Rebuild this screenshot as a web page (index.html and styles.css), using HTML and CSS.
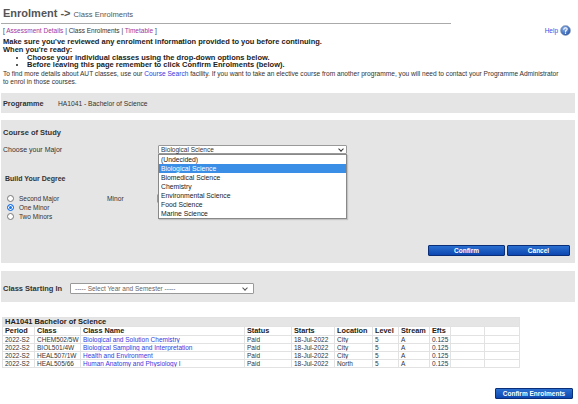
FILE: index.html
```html
<!DOCTYPE html>
<html lang="en">
<head>
  <meta charset="UTF-8" />
  <title>Class Enrolments</title>
  <link rel="stylesheet" href="styles.css">
</head>
<body>

  <h1 class="titolo">Enrolment -&gt; <span class="sottotitolo">Class Enrolments</span></h1>

  <div class="barra-nav">
    <div class="nav">[ <a href="#" class="viola">Assessment Details</a> | Class Enrolments | <a href="#" class="viola">Timetable</a> ]</div>
    <a href="#" class="aiuto">Help
      <svg width="11" height="11" viewBox="0 0 11 11">
        <defs>
          <radialGradient id="g" cx="40%" cy="35%" r="70%">
            <stop offset="0" stop-color="#8fb4ea"/>
            <stop offset="1" stop-color="#1f4fa8"/>
          </radialGradient>
        </defs>
        <circle cx="5.5" cy="5.5" r="5" fill="url(#g)" stroke="#9aa6b8" stroke-width="0.6"/>
        <path d="M3.8 4.3 Q4 2.8 5.6 2.8 Q7.3 2.9 7.1 4.3 Q6.9 5.2 5.8 5.6 L5.6 6.8" fill="none" stroke="#fff" stroke-width="1.1" stroke-linecap="round"/>
        <circle cx="5.5" cy="8.3" r="0.7" fill="#fff"/>
      </svg>
    </a>
  </div>

  <div class="istruzioni">
    <div>Make sure you've reviewed any enrolment information provided to you before continuing.</div>
    <div>When you're ready:</div>
    <ul>
      <li>Choose your individual classes using the drop-down options below.</li>
      <li>Before leaving this page remember to click Confirm Enrolments (below).</li>
    </ul>
  </div>

  <p class="info"><span>To find more details about AUT classes, use our <a href="#" class="blu">Course Search</a> facility. If you want to take an elective course from another programme, you will need to contact your Programme Administrator</span><br><span>to enrol in those courses.</span></p>

  <div class="banda banda-programma">
    <span class="etichetta-programma">Programme</span>
    <span>HA1041 - Bachelor of Science</span>
  </div>

  <div class="banda banda-corso">
    <div class="titolo-sezione">Course of Study</div>
    <div class="riga-major">
      <span class="etichetta-major">Choose your Major</span>
      <div class="contenitore-select">
        <div class="finto-select select-major">Biological Science<span class="freccia"></span></div>
        <ul class="menu-aperto">
          <li>(Undecided)</li>
          <li class="scelto">Biological Science</li>
          <li>Biomedical Science</li>
          <li>Chemistry</li>
          <li>Environmental Science</li>
          <li>Food Science</li>
          <li>Marine Science</li>
        </ul>
      </div>
    </div>

    <div class="titolo-grado">Build Your Degree</div>
    <div class="riga-grado">
      <div class="radio-lista">
        <label class="radio"><span class="cerchio"></span>Second Major</label>
        <label class="radio"><span class="cerchio pieno"></span>One Minor</label>
        <label class="radio"><span class="cerchio"></span>Two Minors</label>
      </div>
      <span class="etichetta-minor">Minor</span>
      <div class="finto-select select-minor"></div>
    </div>

    <div class="riga-bottoni">
      <button class="bottone bottone-conferma">Confirm</button>
      <button class="bottone bottone-annulla">Cancel</button>
    </div>
  </div>

  <div class="banda banda-classe">
    <span class="etichetta-classe">Class Starting In</span>
    <div class="finto-select select-anno">----- Select Year and Semester -----<span class="freccia"></span></div>
  </div>

  <table class="tabella">
    <colgroup>
      <col style="width:32px"><col style="width:46px"><col style="width:164px"><col style="width:47px">
      <col style="width:43px"><col style="width:38px"><col style="width:26px"><col style="width:31px">
      <col style="width:21px"><col style="width:34px"><col style="width:35px">
    </colgroup>
    <tr class="intestazione"><td colspan="11">HA1041 Bachelor of Science</td></tr>
    <tr class="colonne">
      <th>Period</th><th>Class</th><th>Class Name</th><th>Status</th><th>Starts</th><th>Location</th><th>Level</th><th>Stream</th><th>Efts</th><th></th><th></th>
    </tr>
    <tr><td>2022-S2</td><td>CHEM502/5W</td><td><a href="#" class="blu">Biological and Solution Chemistry</a></td><td>Paid</td><td>18-Jul-2022</td><td>City</td><td>5</td><td>A</td><td>0.125</td><td></td><td></td></tr>
    <tr><td>2022-S2</td><td>BIOL501/4W</td><td><a href="#" class="blu">Biological Sampling and Interpretation</a></td><td>Paid</td><td>18-Jul-2022</td><td>City</td><td>5</td><td>A</td><td>0.125</td><td></td><td></td></tr>
    <tr><td>2022-S2</td><td>HEAL507/1W</td><td><a href="#" class="blu">Health and Environment</a></td><td>Paid</td><td>18-Jul-2022</td><td>City</td><td>5</td><td>A</td><td>0.125</td><td></td><td></td></tr>
    <tr><td>2022-S2</td><td>HEAL505/66</td><td><a href="#" class="blu">Human Anatomy and Physiology I</a></td><td>Paid</td><td>18-Jul-2022</td><td>North</td><td>5</td><td>A</td><td>0.125</td><td></td><td></td></tr>
  </table>

  <div class="riga-finale">
    <button class="bottone bottone-finale">Confirm Enrolments</button>
  </div>

</body>
</html>
```

FILE: styles.css
```css
html, body {
  margin: 0;
  padding: 0;
  background: #fff;
  font-family: "Liberation Sans", Arial, sans-serif;
  color: #333;
}

body {
  width: 574px;
  padding-left: 1px;
}

a {
  text-decoration: none;
}

.viola {
  color: #a0359f;
}

.blu {
  color: #3838e0;
}

.titolo {
  margin: 0;
  padding: 5px 0 0 2px;
  width: 448px;
  font-size: 11px;
  line-height: 16px;
  color: #555;
  border-bottom: 1px solid #aaa;
}

.sottotitolo {
  font-size: 7.6px;
  font-weight: normal;
}

.barra-nav {
  display: flex;
  justify-content: space-between;
  align-items: flex-start;
  margin-top: 2px;
  padding: 0 4px 0 2px;
  font-size: 6.5px;
  line-height: 9px;
}

.aiuto {
  display: flex;
  align-items: center;
  gap: 2px;
  margin-top: 0;
  height: 9px;
  color: #4848e8;
  font-size: 6.5px;
}

.istruzioni {
  margin-top: 3px;
  padding-left: 2px;
  font-size: 7.5px;
  font-weight: bold;
  line-height: 7.8px;
  color: #222;
}

.istruzioni ul {
  margin: 0;
  padding-left: 24px;
}

.info {
  margin: 1px 0 0 0;
  padding-left: 2px;
  font-size: 6.6px;
  line-height: 8px;
  color: #333;
  white-space: nowrap;
}

.banda {
  background: #e5e5e5;
  font-size: 6.7px;
}

.banda-programma {
  display: flex;
  margin-top: 7px;
  height: 20px;
  align-items: center;
  padding-left: 2px;
}

.etichetta-programma {
  width: 55px;
  font-weight: bold;
  font-size: 7.3px;
}

.banda-corso {
  margin-top: 7px;
  padding: 8px 3px 7px 2px;
}

.titolo-sezione {
  font-weight: bold;
  font-size: 7.5px;
  line-height: 9px;
}

.riga-major {
  display: flex;
  align-items: center;
  margin-top: 7px;
  height: 10px;
  font-size: 7px;
}

.etichetta-major {
  width: 155px;
}

.contenitore-select {
  position: relative;
}

.finto-select {
  position: relative;
  box-sizing: border-box;
  background: #fff;
  border: 1px solid #999;
  border-radius: 1px;
  font-size: 6.5px;
  line-height: 7px;
  padding-left: 2px;
  color: #333;
}

.select-major {
  width: 189px;
  height: 9px;
}

.freccia {
  position: absolute;
  right: 3px;
  top: 1px;
  width: 3px;
  height: 3px;
  border-right: 1.2px solid #333;
  border-bottom: 1.2px solid #333;
  transform: rotate(45deg);
}

.menu-aperto {
  position: absolute;
  top: 9px;
  left: 0;
  width: 189px;
  box-sizing: border-box;
  margin: 0;
  padding: 0;
  list-style: none;
  background: #fff;
  border: 1px solid #888;
  box-shadow: 1px 1px 1px rgba(0, 0, 0, 0.15);
  z-index: 2;
}

.menu-aperto li {
  height: 9px;
  line-height: 9px;
  padding-left: 2px;
  font-size: 6.8px;
  color: #222;
}

.menu-aperto li.scelto {
  background: #3a8ee6;
  color: #fff;
}

.titolo-grado {
  margin-top: 20px;
  padding-left: 2px;
  font-weight: bold;
  font-size: 7px;
  line-height: 9px;
}

.riga-grado {
  display: flex;
  margin-top: 11px;
}

.radio-lista {
  width: 104px;
  display: flex;
  flex-direction: column;
}

.radio {
  display: flex;
  align-items: center;
  height: 9px;
  padding-left: 4px;
  font-size: 6.5px;
}

.cerchio {
  box-sizing: border-box;
  width: 7px;
  height: 7px;
  margin-right: 5px;
  border: 1px solid #777;
  border-radius: 50%;
  background: #fff;
}

.cerchio.pieno {
  border: 1.6px solid #1a73e8;
  box-shadow: inset 0 0 0 1px #fff;
  background: #1a73e8;
}

.etichetta-minor {
  width: 50px;
  height: 9px;
  line-height: 9px;
}

.select-minor {
  width: 60px;
  height: 9px;
}

.riga-bottoni {
  display: flex;
  justify-content: flex-end;
  gap: 2px;
  margin-top: 24px;
  padding-right: 2px;
}

.bottone {
  box-sizing: border-box;
  height: 11px;
  padding: 0;
  border: 1px solid #0a2f78;
  border-radius: 1px;
  background: linear-gradient(#2a6fd0, #0d47b0);
  color: #fff;
  font-family: "Liberation Sans", Arial, sans-serif;
  font-weight: bold;
  font-size: 6.5px;
  line-height: 9px;
  cursor: pointer;
}

.bottone-conferma {
  width: 77px;
}

.bottone-annulla {
  width: 63px;
}

.banda-classe {
  display: flex;
  align-items: center;
  margin-top: 8px;
  height: 31px;
  padding: 4px 0 0 2px;
  box-sizing: border-box;
}

.etichetta-classe {
  width: 67px;
  font-weight: bold;
  font-size: 7.5px;
}

.select-anno {
  width: 184px;
  height: 11px;
  line-height: 9px;
  color: #666;
  padding-left: 4px;
}

.select-anno .freccia {
  top: 2px;
  right: 6px;
  border-color: #555;
}

.tabella {
  margin-top: 15px;
  margin-left: 1px;
  width: 517px;
  table-layout: fixed;
  border-collapse: collapse;
  font-size: 6.5px;
}

.tabella td, .tabella th {
  border: 1px solid #e2e2e2;
  padding: 0 2px;
  height: 7px;
  line-height: 7px;
  white-space: nowrap;
  overflow: hidden;
  text-align: left;
}

.tabella .intestazione td {
  background: #e5e5e5;
  font-weight: bold;
  font-size: 7.5px;
  height: 8px;
  line-height: 8px;
  color: #222;
}

.tabella th {
  font-size: 7.3px;
  color: #222;
  height: 8px;
  line-height: 8px;
}

.riga-finale {
  display: flex;
  justify-content: flex-end;
  margin-top: 20px;
  padding-right: 2px;
}

.bottone-finale {
  width: 78px;
}
```
